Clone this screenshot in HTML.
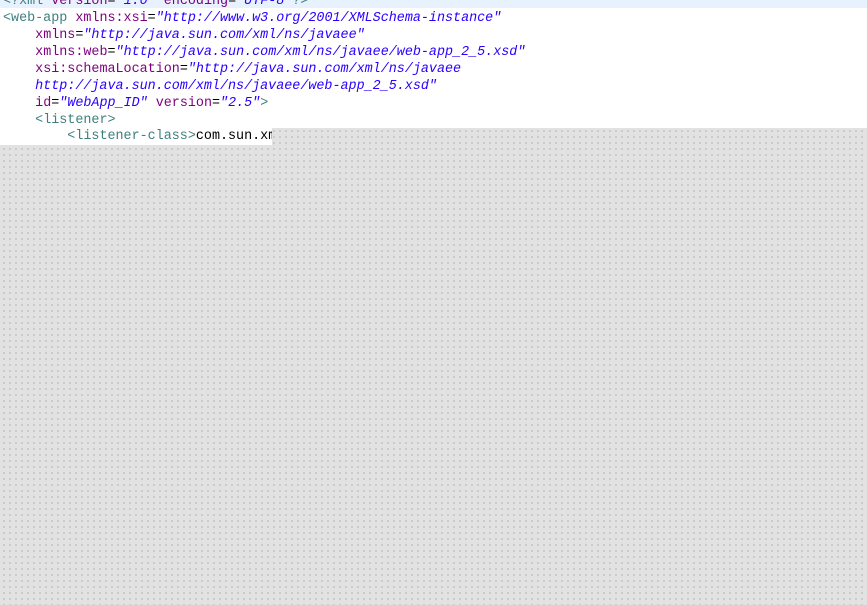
<!DOCTYPE html><html><head><style>
body{margin:0;width:867px;height:605px;overflow:hidden;position:relative;
background-color:#e2e2e2;background-image:radial-gradient(circle,#c4c4c4 0.8px,transparent 1.1px);background-size:6px 6px;background-position:1px 2px;}
.w{position:absolute;left:0;top:0;width:867px;height:128px;background:#fff}
.w2{position:absolute;left:0;top:128px;width:272px;height:17px;background:#fff;overflow:hidden}
.hl{position:absolute;left:0;top:0;width:867px;height:8px;background:#e8f2fe}
pre{position:absolute;left:3px;top:-7px;margin:0;font:13.4px/17px "Liberation Mono",monospace;color:#000}
.w2 pre{top:0px}
.t{color:#3f7f7f}.a{color:#7f007f}.v{color:#2a00ff;font-style:italic}
</style></head><body>
<div class="w"></div><div class="w2"><pre>        <span class="t">&lt;listener-class&gt;</span>com.sun.xm</pre></div><div class="hl"></div>
<pre><span class="t">&lt;?xml</span> <span class="a">version</span>=<span class="v">"1.0"</span> <span class="a">encoding</span>=<span class="v">"UTF-8"</span><span class="t">?&gt;</span>
<span class="t">&lt;web-app</span> <span class="a">xmlns:xsi</span>=<span class="v">"http://www.w3.org/2001/XMLSchema-instance"</span>
    <span class="a">xmlns</span>=<span class="v">"http://java.sun.com/xml/ns/javaee"</span>
    <span class="a">xmlns:web</span>=<span class="v">"http://java.sun.com/xml/ns/javaee/web-app_2_5.xsd"</span>
    <span class="a">xsi:schemaLocation</span>=<span class="v">"http://java.sun.com/xml/ns/javaee
    http://java.sun.com/xml/ns/javaee/web-app_2_5.xsd"</span>
    <span class="a">id</span>=<span class="v">"WebApp_ID"</span> <span class="a">version</span>=<span class="v">"2.5"</span><span class="t">&gt;</span>
    <span class="t">&lt;listener&gt;</span></pre>
</body></html>
